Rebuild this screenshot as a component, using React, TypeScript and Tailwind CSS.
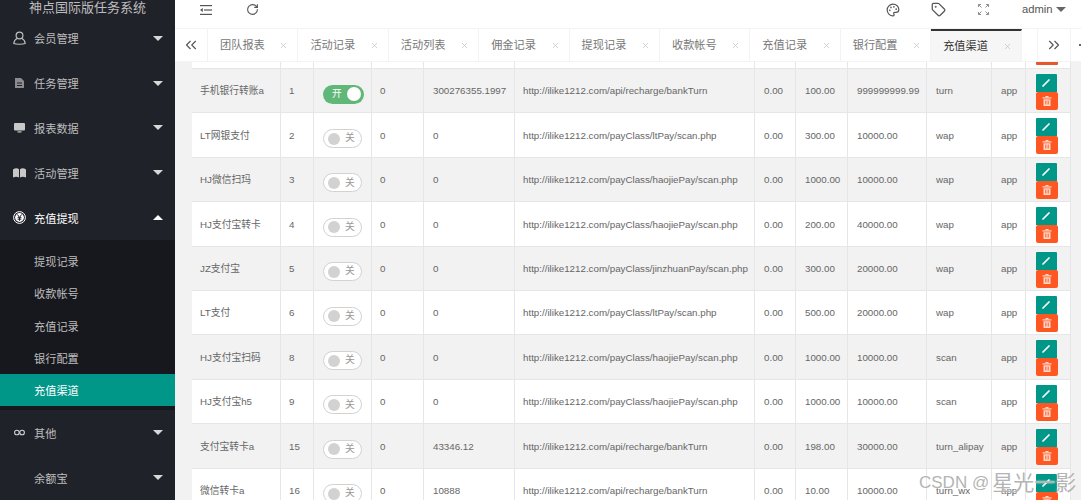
import type { ReactNode } from "react";
import { ChevronsLeft, ChevronsRight, RotateCw, Palette, Tag, X } from "lucide-react";

const tabs = ["团队报表", "活动记录", "活动列表", "佣金记录", "提现记录", "收款帐号", "充值记录", "银行配置", "充值渠道"];

const rows = [
  { name: "手机银行转账a", id: "1", on: true, b: "300276355.1997", url: "http://ilike1212.com/api/recharge/bankTurn", c: "100.00", max: "999999999.99", type: "turn" },
  { name: "LT网银支付", id: "2", on: false, b: "0", url: "http://ilike1212.com/payClass/ltPay/scan.php", c: "300.00", max: "10000.00", type: "wap" },
  { name: "HJ微信扫玛", id: "3", on: false, b: "0", url: "http://ilike1212.com/payClass/haojiePay/scan.php", c: "1000.00", max: "10000.00", type: "wap" },
  { name: "HJ支付宝转卡", id: "4", on: false, b: "0", url: "http://ilike1212.com/payClass/haojiePay/scan.php", c: "200.00", max: "40000.00", type: "wap" },
  { name: "JZ支付宝", id: "5", on: false, b: "0", url: "http://ilike1212.com/payClass/jinzhuanPay/scan.php", c: "300.00", max: "20000.00", type: "wap" },
  { name: "LT支付", id: "6", on: false, b: "0", url: "http://ilike1212.com/payClass/ltPay/scan.php", c: "500.00", max: "20000.00", type: "wap" },
  { name: "HJ支付宝扫码", id: "8", on: false, b: "0", url: "http://ilike1212.com/payClass/haojiePay/scan.php", c: "1000.00", max: "10000.00", type: "scan" },
  { name: "HJ支付宝h5", id: "9", on: false, b: "0", url: "http://ilike1212.com/payClass/haojiePay/scan.php", c: "1000.00", max: "10000.00", type: "scan" },
  { name: "支付宝转卡a", id: "15", on: false, b: "43346.12", url: "http://ilike1212.com/api/recharge/bankTurn", c: "198.00", max: "30000.00", type: "turn_alipay" },
  { name: "微信转卡a", id: "16", on: false, b: "10888", url: "http://ilike1212.com/api/recharge/bankTurn", c: "10.00", max: "10000.00", type: "turn_wx" },
];

const cols = "grid-cols-[89px_33px_58px_52px_91px_240px_41px_52px_79px_65px_34px_45px]";
const cell = "flex items-center border-r border-[#e6e6e6] pl-2 pt-[2px] whitespace-nowrap";
const cellWide = "flex items-center border-r border-[#e6e6e6] pl-[9px] pt-[2px] whitespace-nowrap";

function Caret({ up }: { up?: boolean }) {
  return up ? (
    <div className="ml-auto mr-[12px] border-x-[5px] border-b-[5px] border-x-transparent border-b-white" />
  ) : (
    <div className="ml-auto mr-[12px] border-x-[5px] border-t-[5px] border-x-transparent border-t-[#d8d8d8]" />
  );
}

function MenuItem({ label, icon, up, white }: { label: string; icon?: ReactNode; up?: boolean; white?: boolean }) {
  return (
    <div className={`flex h-[45px] items-center ${white ? "text-white" : "text-[#bdbdbd]"}`}>
      <div className="flex w-[34px] justify-center pl-[4px]">{icon}</div>
      <span className="pt-[3px] text-[11.2px]">{label}</span>
      <Caret up={up} />
    </div>
  );
}

function SubItem({ label, active }: { label: string; active?: boolean }) {
  return (
    <div className={`flex h-[32.3px] items-center pl-[34px] pt-[3px] text-[11.2px] ${active ? "bg-[#009688] text-white" : "text-[#bdbdbd]"}`}>
      {label}
    </div>
  );
}

function UserIcon() {
  return (
    <svg width="13" height="14" viewBox="0 0 13 14" fill="none" stroke="#bdbdbd" strokeWidth="1.2">
      <circle cx="6.5" cy="4.5" r="3.4" />
      <path d="M4 7.5C2 8.5 1 10 .8 12.5c2 1 9.4 1 11.4 0-.2-2.500-1.200-4-3.200-5" />
    </svg>
  );
}

function DocIcon() {
  return (
    <svg width="9" height="10" viewBox="0 0 9 10" fill="#8b8b90">
      <path d="M0 0h6l3 3v7H0z" />
      <path d="M2 5h5M2 7.500h5" stroke="#20222a" />
    </svg>
  );
}

function ScreenIcon() {
  return (
    <svg width="11" height="10" viewBox="0 0 11 10" fill="#c8c8c8">
      <rect x="0" y="0" width="11" height="7.500" rx="1" />
      <rect x="3.500" y="8.300" width="4" height="1.200" />
    </svg>
  );
}

function BookIcon() {
  return (
    <svg width="13" height="11" viewBox="0 0 13 11" fill="#c8c8c8">
      <path d="M0 2.500C2 1 4.500 1 6 2.200V10.500C4.500 9.500 2 9.500 0 10.500z" />
      <path d="M13 2.500C11 1 8.500 1 7 2.200V10.500C8.500 9.500 11 9.500 13 10.500z" />
    </svg>
  );
}

function YenIcon() {
  return (
    <svg width="13" height="13" viewBox="0 0 13 13">
      <circle cx="6.500" cy="6.500" r="5.900" fill="none" stroke="#fff" strokeWidth="1" />
      <circle cx="6.500" cy="6.500" r="4.400" fill="#fff" />
      <path d="M4.500 3.500l2 3 2-3M6.500 6.500v3.300M4.600 6.700h3.800M4.600 8.200h3.800" fill="none" stroke="#20222a" strokeWidth="1" />
    </svg>
  );
}

function LoopIcon() {
  return (
    <svg width="11" height="7" viewBox="0 0 11 7" fill="none" stroke="#d0d0d0" strokeWidth="1.100">
      <circle cx="2.900" cy="3.500" r="2.300" />
      <circle cx="8.100" cy="3.500" r="2.300" />
    </svg>
  );
}

function ShrinkIcon() {
  return (
    <svg width="12" height="10" viewBox="0 0 12 10" fill="#555">
      <rect x="0" y="0" width="12" height="1.200" />
      <rect x="4" y="4.400" width="8" height="1.200" />
      <rect x="0" y="8.800" width="12" height="1.200" />
      <path d="M0 5l2.800-2v4z" />
    </svg>
  );
}

function FullIcon() {
  return (
    <svg width="11" height="11" viewBox="0 0 11 11" fill="none" stroke="#8f8f8f" strokeWidth="1">
      <path d="M.5 3V.5H3M.5.500L3.500 3.500" />
      <path d="M8 .5h2.500V3M10.500.500L7.500 3.500" />
      <path d="M.5 8v2.500H3M.5 10.500L3.500 7.500" />
      <path d="M8 10.500h2.500V8M10.500 10.500L7.500 7.500" />
    </svg>
  );
}

function PencilIcon() {
  return (
    <svg width="8" height="8" viewBox="0 0 8 8" fill="none" stroke="#fff" strokeWidth="1.700" strokeLinecap="round">
      <path d="M1 7L7 1" />
    </svg>
  );
}

function TrashIcon() {
  return (
    <svg width="10" height="10" viewBox="0 0 10 10" fill="#ffd9cc">
      <rect x="0.500" y="1.300" width="9" height="1.200" />
      <rect x="3.500" y="0" width="3" height="1.300" />
      <path d="M1.500 3.300h7V10h-7z" />
      <path d="M3.500 4.500v4M5 4.500v4M6.500 4.500v4" stroke="#ff5722" strokeWidth=".7" />
    </svg>
  );
}

function Actions() {
  return (
    <>
      <div className="flex h-[18px] w-[21px] items-center justify-center rounded-t-[1px] bg-[#009688]">
        <PencilIcon />
      </div>
      <div className="flex h-[18px] w-[22px] items-center justify-center rounded-[2px] bg-[#ff5722]">
        <TrashIcon />
      </div>
    </>
  );
}

function Row({ r, even }: { r: (typeof rows)[number]; even: boolean }) {
  return (
    <div className={`grid h-[44.4px] shrink-0 border-b border-[#e6e6e6] ${cols} ${even ? "bg-[#f2f2f2]" : "bg-white"}`}>
      <div className={cell}>{r.name}</div>
      <div className={cell}>{r.id}</div>
      <div className="flex items-center border-r border-[#e6e6e6] pl-[9px] pt-[7px] whitespace-nowrap">
        {r.on ? (
          <div className="flex h-[19px] w-[41px] items-center justify-between rounded-full bg-[#5fb878] pl-[9px] pr-[3px] text-white">
            <span>开</span>
            <span className="h-[14px] w-[14px] rounded-full bg-white" />
          </div>
        ) : (
          <div className="flex h-[19px] w-[39px] items-center gap-[5px] rounded-full border border-[#d2d2d2] bg-white pl-[4px] text-[#999]">
            <span className="h-[12px] w-[12px] rounded-full bg-[#d2d2d2]" />
            <span>关</span>
          </div>
        )}
      </div>
      <div className={cell}>0</div>
      <div className={cellWide}>{r.b}</div>
      <div className={cell}>{r.url}</div>
      <div className={cellWide}>0.00</div>
      <div className={cellWide}>{r.c}</div>
      <div className={cellWide}>{r.max}</div>
      <div className={cellWide}>{r.type}</div>
      <div className={cellWide}>app</div>
      <div className="flex flex-col border-r border-[#e6e6e6] pl-[9.500px] pt-[5px]">
        <Actions />
      </div>
    </div>
  );
}

export default function App() {
  return (
    <div
      className="relative flex h-[500px] w-[1081px] overflow-hidden bg-[#f2f2f2] text-[#666]"
      style={{ fontFamily: '"Liberation Sans", "Noto Sans CJK SC", sans-serif' }}
    >
      <aside className="flex w-[175px] shrink-0 flex-col overflow-hidden bg-[#20222a]">
        <div className="h-[16px] shrink-0 text-center text-[13px] leading-[16px] text-[#bdbdbd]">神点国际版任务系统</div>
        <MenuItem label="会员管理" icon={<UserIcon />} />
        <MenuItem label="任务管理" icon={<DocIcon />} />
        <MenuItem label="报表数据" icon={<ScreenIcon />} />
        <MenuItem label="活动管理" icon={<BookIcon />} />
        <MenuItem label="充值提现" icon={<YenIcon />} up white />
        <div className="bg-[#17181d] pb-[4px] pt-[5px]">
          <SubItem label="提现记录" />
          <SubItem label="收款帐号" />
          <SubItem label="充值记录" />
          <SubItem label="银行配置" />
          <SubItem label="充值渠道" active />
        </div>
        <MenuItem label="其他" icon={<LoopIcon />} />
        <MenuItem label="余额宝" />
      </aside>
      <main className="flex min-w-0 flex-1 flex-col">
        <header className="flex h-[28px] shrink-0 items-center bg-white pb-[9px] text-[#555]">
          <div className="ml-[25px]"><ShrinkIcon /></div>
          <RotateCw size={13} className="ml-[34px]" />
          <Palette size={14} className="ml-[627px]" />
          <Tag size={15} className="ml-[31px]" />
          <div className="ml-[32px]"><FullIcon /></div>
          <span className="ml-[33px] text-[11.2px]">admin</span>
          <div className="ml-[4px] border-x-[5px] border-t-[5px] border-x-transparent border-t-[#666]" />
        </header>
        <nav className="flex h-[34px] shrink-0 items-center border-y border-[#f3f3f3] bg-white">
          <div className="flex h-full w-[33px] shrink-0 items-center justify-center border-r border-[#f3f3f3]">
            <ChevronsLeft size={18} strokeWidth={1.500} className="text-[#555]" />
          </div>
          {tabs.map((t, i) => (
            <div
              key={t}
              className={`flex h-full w-[90.4px] shrink-0 items-center justify-between border-r border-[#f3f3f3] pl-[12px] pr-[9px] text-[11.2px] ${
                i === tabs.length - 1 ? "border-t-2 border-t-[#333] bg-[#f6f6f6] text-[#333]" : "text-[#777]"
              }`}
            >
              <span>{t}</span>
              <X size={9} className="text-[#c4c4c4]" />
            </div>
          ))}
          <div className="ml-[15px] flex h-full w-[34px] shrink-0 items-center justify-center border-x border-[#f3f3f3]">
            <ChevronsRight size={18} strokeWidth={1.500} className="text-[#555]" />
          </div>
          <div className="ml-[8px] h-[2px] w-[2px] bg-[#666]" />
        </nav>
        <div className="flex min-h-0 flex-1 flex-col overflow-hidden pl-[17px] text-[9.75px]">
          <div className={`grid h-[7px] w-[879px] shrink-0 border-b border-[#e6e6e6] bg-white ${cols}`}>
            {rows.slice(0, 9).map((r) => (
              <div key={r.id} className="border-r border-[#e6e6e6]" />
            ))}
            <div className="border-r border-[#e6e6e6]" />
            <div className="border-r border-[#e6e6e6]" />
            <div className="border-r border-[#e6e6e6] pl-[9.500px]">
              <div className="h-[2.500px] w-[22px] rounded-b-[1px] bg-[#e8562a]" />
            </div>
          </div>
          <div className="w-[879px] shrink-0">
            {rows.map((r, i) => (
              <Row key={r.id} r={r} even={i % 2 === 0} />
            ))}
          </div>
        </div>
      </main>
      <div className="absolute left-[919px] top-[467px] flex items-center gap-[3px] whitespace-nowrap text-[17px] text-[#b4b4b4] [text-shadow:0_0_2px_#ffffff]">
        <span>CSDN @</span>
        <span className="text-[21px]">星光一影</span>
      </div>
    </div>
  );
}
